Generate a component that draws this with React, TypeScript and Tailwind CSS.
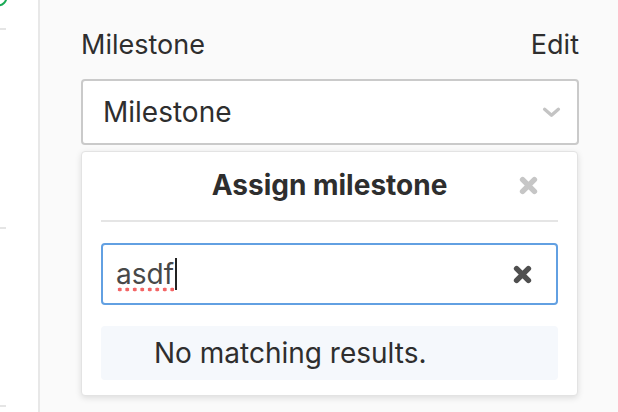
const font = { fontFamily: "Inter, 'Liberation Sans', sans-serif" };

const CloseIcon = ({ className }: { className: string }) => (
  <svg viewBox="0 0 20 20" className={className} fill="none">
    <path d="M3.8 3.8 L16.2 16.2 M16.2 3.8 L3.8 16.2" stroke="currentColor" strokeWidth="5.8" strokeLinecap="round" />
  </svg>
);

const Chevron = () => (
  <svg viewBox="0 0 20 12" className="h-[11px] w-[19px] text-[#c4c4c4]" fill="none">
    <path d="M2.5 2.5 L10 9 L17.5 2.5" stroke="currentColor" strokeWidth="3.6" strokeLinecap="round" strokeLinejoin="round" />
  </svg>
);

const App = () => {
  return (
    <div className="flex h-[412px] w-[618px] overflow-hidden bg-[#fafafa] text-[#2e2e2e]" style={font}>
      {/* left column edge */}
      <div className="flex w-[40px] shrink-0 flex-col border-r-2 border-[#e8e8e8] bg-white">
        <svg viewBox="0 0 10 10" className="h-[10px] w-[10px]" fill="none">
          <circle cx="-2" cy="-3" r="8.5" stroke="#1aaa55" strokeWidth="2" />
        </svg>
        <div className="mt-[18px] h-[2px] w-[6px] bg-[#e5e5e5]" />
        <div className="mt-[197px] h-[2px] w-[6px] bg-[#e5e5e5]" />
        <div className="mt-[176px] h-[2px] w-[6px] bg-[#e5e5e5]" />
      </div>

      <div className="flex w-[498px] flex-col pl-[41px] pt-[29px] box-content">
        <div className="flex items-center justify-between text-[27px] leading-[32px]">
          <span>Milestone</span>
          <span>Edit</span>
        </div>

        <div className="mt-[18px] flex h-[66px] items-center justify-between rounded-[4px] border-2 border-[#cacaca] bg-white pl-[20px] pr-[16px] text-[28px] leading-[32px]">
          <span>Milestone</span>
          <Chevron />
        </div>

        <div className="mt-[6px] flex w-[497px] flex-col rounded-[4px] border border-[#e3e3e3] bg-white px-[19px] pb-[15px] pt-[17px] shadow-[0_2px_6px_rgba(0,0,0,0.12)]">
          <div className="relative flex items-center justify-center">
            <span className="text-[28px] font-bold leading-[32px]">Assign milestone</span>
            <CloseIcon className="absolute right-[20px] top-[7px] h-[19px] w-[19px] text-[#c6c6c6]" />
          </div>
          <div className="mt-[19px] h-[2px] bg-[#e5e5e5]" />

          <div className="mt-[21px] flex h-[62px] items-center justify-between rounded-[4px] border-2 border-[#62a0e2] pl-[13px] pr-[24px] text-[28px] leading-[32px] text-[#484848]">
            <span className="flex items-center">
              <span className="relative">
                asdf
                <span className="absolute bottom-[-2px] left-0 h-[5px] w-full bg-[radial-gradient(circle,#f36464_1.7px,transparent_2.2px)] bg-[length:7.5px_5px]" />
              </span>
              <span className="ml-[1px] h-[32px] w-[2px] bg-[#222]" />
            </span>
            <CloseIcon className="h-[19px] w-[19px] text-[#4f4f4f]" />
          </div>

          <div className="mt-[21px] flex h-[54px] items-center rounded-[4px] bg-[#f5f8fc] pl-[53px] text-[28px] leading-[32px]">
            No matching results.
          </div>
        </div>
      </div>
    </div>
  );
};

export default App;
